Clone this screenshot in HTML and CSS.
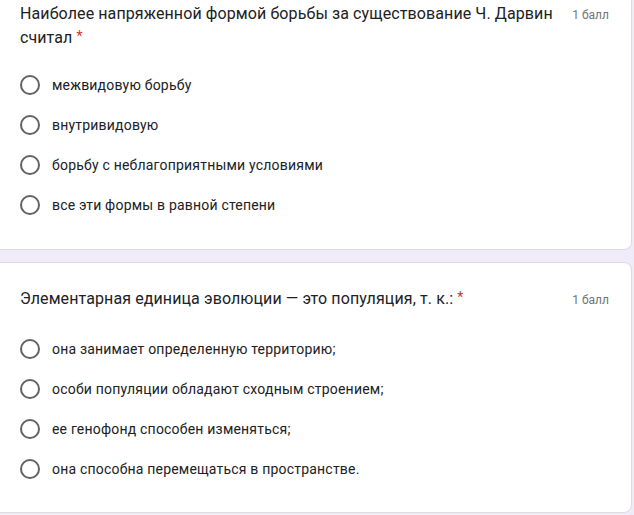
FILE: index.html
```html
<!DOCTYPE html>
<html lang="ru">
<head>
<meta charset="utf-8">
<link rel="stylesheet" href="styles.css">
</head>
<body>
<div class="page">
  <section class="card card-first">
    <div class="head">
      <div class="title">Наиболее напряженной формой борьбы за существование Ч. Дарвин считал <span class="req">*</span></div>
      <div class="points">1 балл</div>
    </div>
    <div class="options">
      <label class="opt"><span class="radio"></span><span class="txt">межвидовую борьбу</span></label>
      <label class="opt"><span class="radio"></span><span class="txt">внутривидовую</span></label>
      <label class="opt"><span class="radio"></span><span class="txt">борьбу с неблагоприятными условиями</span></label>
      <label class="opt"><span class="radio"></span><span class="txt">все эти формы в равной степени</span></label>
    </div>
  </section>
  <section class="card card-second">
    <div class="head">
      <div class="title">Элементарная единица эволюции — это популяция, т. к.: <span class="req">*</span></div>
      <div class="points">1 балл</div>
    </div>
    <div class="options">
      <label class="opt"><span class="radio"></span><span class="txt">она занимает определенную территорию;</span></label>
      <label class="opt"><span class="radio"></span><span class="txt">особи популяции обладают сходным строением;</span></label>
      <label class="opt"><span class="radio"></span><span class="txt">ее генофонд способен изменяться;</span></label>
      <label class="opt"><span class="radio"></span><span class="txt">она способна перемещаться в пространстве.</span></label>
    </div>
  </section>
</div>
</body>
</html>
```

FILE: styles.css
```css
html, body {
  margin: 0;
  padding: 0;
  background: #f0ebf8;
  font-family: Roboto, "Noto Sans", Arial, sans-serif;
  color: #202124;
}
.page {
  display: flex;
  flex-direction: column;
  gap: 12px;
  width: 634px;
}
.card {
  background: #fff;
  margin-left: -10px;
  margin-right: 2px;
  border: 1px solid #dadce0;
  border-radius: 8px;
  padding: 24px 22px 23px 29px;
}
.card-first {
  border-top: none;
  border-radius: 0 0 8px 8px;
  padding-top: 2px;
  padding-bottom: 24px;
}
.head {
  display: flex;
  justify-content: space-between;
  align-items: flex-start;
  gap: 18px;
}
.title {
  font-size: 16px;
  line-height: 24px;
  letter-spacing: 0.1px;
  color: #202124;
  max-width: 535px;
}
.req {
  color: #d93025;
  font-size: 14px;
  line-height: 14px;
  vertical-align: 2px;
}
.points {
  font-size: 12px;
  line-height: 24px;
  color: #70757a;
  white-space: nowrap;
  padding-top: 1px;
}
.options {
  display: flex;
  flex-direction: column;
  margin-top: 15px;
}
.card-second .options {
  margin-top: 17px;
}
.opt {
  display: flex;
  align-items: center;
  height: 40px;
  gap: 12px;
}
.radio {
  box-sizing: border-box;
  width: 20px;
  height: 20px;
  border: 2px solid #5f6368;
  border-radius: 50%;
  flex: none;
}
.txt {
  font-size: 14px;
  letter-spacing: 0.2px;
  color: #202124;
}
```
